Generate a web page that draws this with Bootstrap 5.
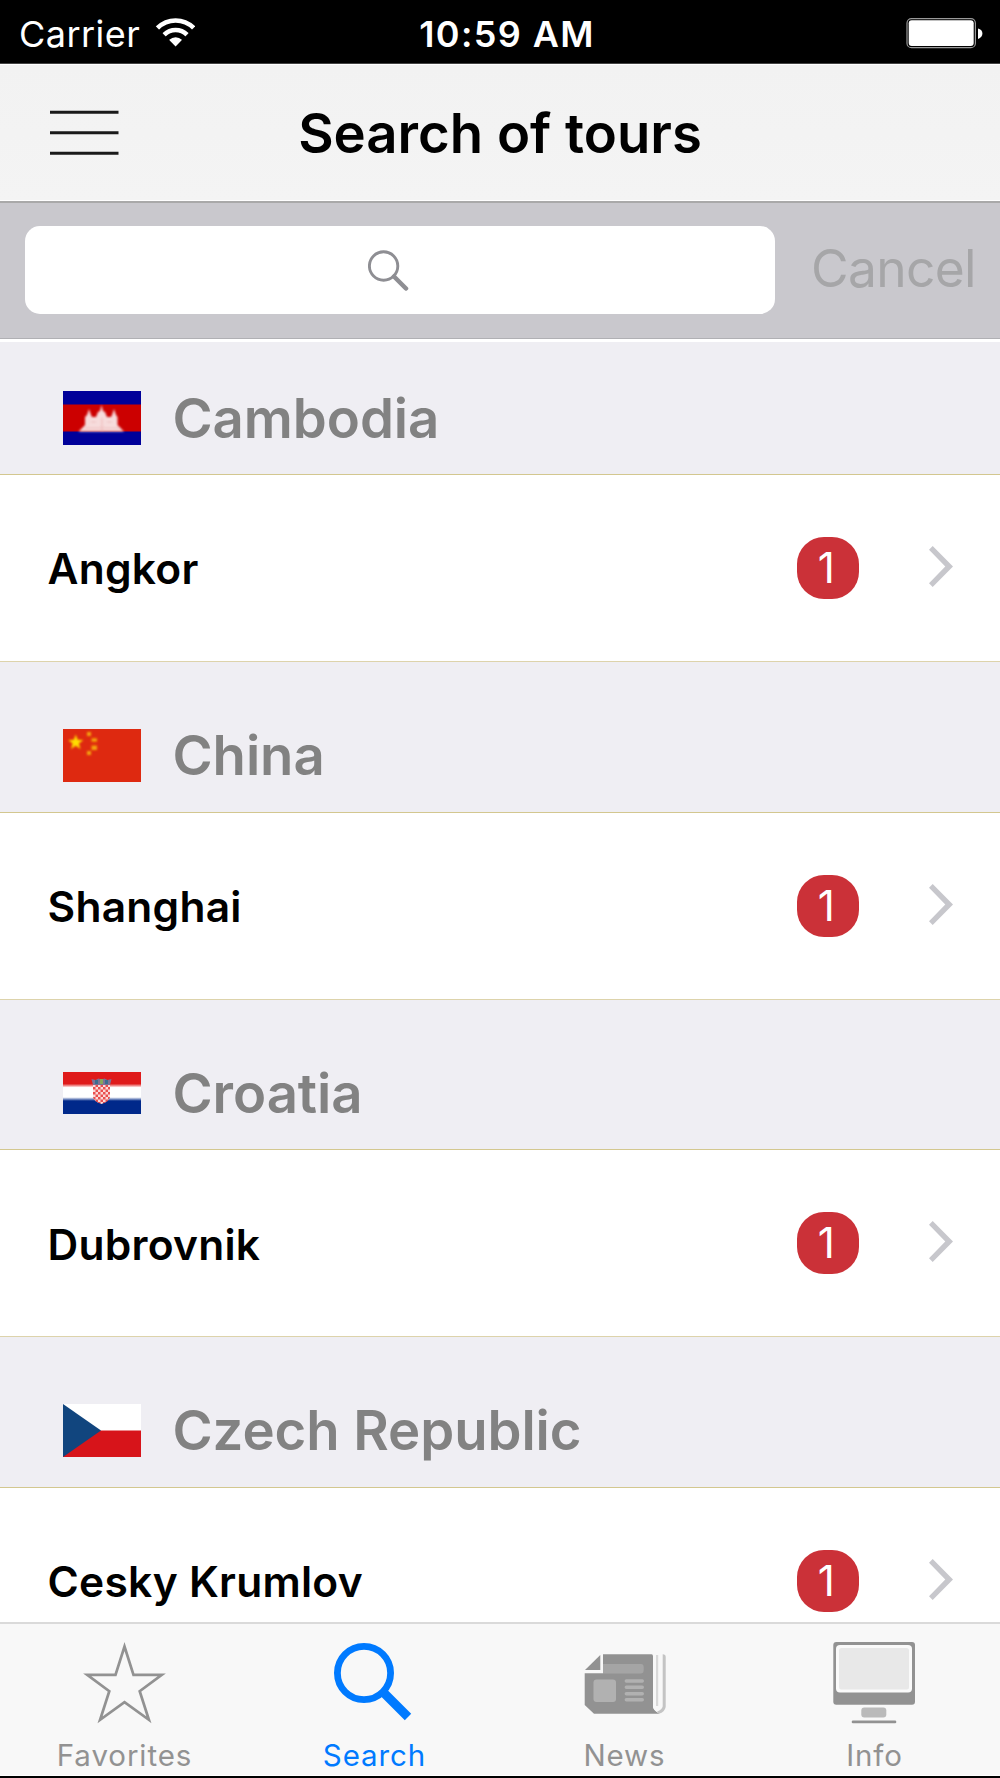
<!DOCTYPE html>
<html lang="en">
<head>
<meta charset="utf-8">
<meta name="viewport" content="width=device-width, initial-scale=1">
<title>Search of tours</title>
<link href="https://cdn.jsdelivr.net/npm/bootstrap@5.3.0/dist/css/bootstrap.min.css" rel="stylesheet">
<style>
body{font-family:Inter,"Noto Sans",sans-serif;color:#000;background:#fff;overflow:hidden;line-height:1}
svg{display:block;flex:none}
.phone{width:1000px;height:1778px}
.status-bar{height:64px;background:#000;border-bottom:1px solid #444;color:#fff;font-size:36px;display:grid;grid-template-columns:1fr auto 1fr;padding:5px 17px 0 19px}
.carrier{font-weight:400;letter-spacing:.45px}
.clock{font-weight:600;letter-spacing:1.37px;padding-left:12px}
.wifi{margin:0 0 4px 15px}
.battery{margin-bottom:2px}
.nav-top{height:139px;background:linear-gradient(#f2f2f2,#f4f4f4);border-top:1px solid #fff;border-bottom:2px solid #a9a9a9;box-shadow:inset 0 -1px #fff;display:grid;grid-template-columns:1fr auto 1fr;padding:0 50px}
.nav-title{font-size:54.5px;font-weight:600}
.search-bar{height:136px;background:#c9c8cd;border-bottom:1px solid #b0b0b4;padding:0 20px 1px 25px}
.search-field{width:750px;height:88px;border-radius:15px;padding-left:343px}
.cancel{font-size:51.5px;letter-spacing:-.68px;color:#a6a6a8;margin-left:36px;padding-bottom:3px}
.tour-list{margin-top:3px;min-height:0}
.country{height:151px;background:#efeef3;border-bottom:1px solid #d3c78f;padding:0 63px 30px;gap:31.5px;color:#828282;font-size:54.5px;font-weight:600;letter-spacing:-.06px}
.country.first-country{height:133px;padding-bottom:29px}
.country.short-country{height:150px;padding-bottom:29px}
.flag-box{height:54px;width:78px}
.city{height:187px;border-bottom:1px solid #ddd3ab;padding:0 47px 0 47.5px;font-size:42.5px;font-weight:600;letter-spacing:.25px}
.city-name{padding-top:3px}
.count{width:62px;height:62px;border-radius:27px;background:#cb3138;color:#fff;font-size:42px;font-weight:400;margin-right:70px;padding-right:3px}
.chev{margin-bottom:3px}
.tab-bar{height:156px;border-top:2px solid #dadada;border-bottom:2px solid #000;background:#f8f8f8;box-shadow:inset 0 -1px #fff}
.tab{color:#929292;font-size:29.5px;letter-spacing:.9px;padding-top:18px;gap:17px}
.tab span{margin-right:1px}
.tab.active{color:#007aff}
</style>
</head>
<body>
<div class="phone d-flex flex-column overflow-hidden">
  <header class="status-bar align-items-center flex-shrink-0">
    <div class="d-flex align-items-center">
      <span class="carrier">Carrier</span>
      <svg class="wifi" width="40" height="30" viewBox="155 17 40 30"><defs><clipPath id="fan"><path d="M175.6 46.5 155 25.5V10H196V25.5Z"/></clipPath></defs><g clip-path="url(#fan)" fill="none" stroke="#fff"><circle cx="175.6" cy="46" r="25.5" stroke-width="4.6"/><circle cx="175.6" cy="46" r="16" stroke-width="4.6"/><circle cx="175.6" cy="46" r="8.8" fill="#fff" stroke="none"/></g></svg>
    </div>
    <div class="clock">10:59 AM</div>
    <svg class="battery ms-auto" width="77" height="32" viewBox="906 17 77 32"><rect x="907" y="18.7" width="68.4" height="29" rx="4.5" fill="none" stroke="#999" stroke-width="1.2"/><rect x="908.7" y="20.3" width="65" height="25.8" rx="3" fill="#fff"/><path d="M978 28.5q4.4 1 4.4 5t-4.4 5.4z" fill="#fff"/></svg>
  </header>
  <nav class="nav-top align-items-center flex-shrink-0">
    <svg width="69" height="46" viewBox="50 110 69 46"><path d="M50 112.2h68.5M50 132.8h68.5M50 153.3h68.5" stroke="#1a1a1a" stroke-width="3"/></svg>
    <div class="nav-title">Search of tours</div>
  </nav>
  <div class="search-bar d-flex align-items-center flex-shrink-0">
    <div class="search-field bg-white d-flex align-items-center flex-shrink-0">
      <svg width="41" height="41" viewBox="368 250 41 41"><circle cx="383.6" cy="266" r="14.2" fill="none" stroke="#8e8e93" stroke-width="2.9"/><path d="m394 276.500 12 12" stroke="#8e8e93" stroke-width="4.5" stroke-linecap="round"/></svg>
    </div>
    <span class="cancel">Cancel</span>
  </div>
  <main class="tour-list flex-grow-1 overflow-hidden">
    <div class="country first-country d-flex align-items-end">
      <div class="flag-box d-flex align-items-center"><svg width="78" height="54"><defs><filter id="soft"><feGaussianBlur stdDeviation=".8"/></filter></defs><path fill="#000099" d="M0 0h78v54H0z"/><path fill="#c00" d="M0 13.500h78v27H0z"/><path filter="url(#soft)" fill="#f6dcdc" d="M15.500 40.500 22 34V26l2-2 2-6 2 6 1 2h4l2-5 2-1 1.500-6 1.500 6 2 1 2 5h4l1-2 2-6 2 6 1.500 2v8l6.500 6.500z"/><path d="M22 37h35M28 31h5M44 31h5M39 27v13" stroke="#eaa5a5" stroke-width="1.200" opacity=".6" filter="url(#soft)"/></svg></div>
      <div class="d-flex align-items-center flag-box text-nowrap">Cambodia</div>
    </div>
    <div class="city d-flex align-items-center"><span class="city-name me-auto">Angkor</span><span class="count d-flex align-items-center justify-content-center">1</span><svg class="chev" width="24" height="41"><path fill="#c7c7cc" d="M3.700 0 24 20.500 3.700 41 0 37.300 16.300 20.500 0 3.700z"/></svg></div>

    <div class="country d-flex align-items-end">
      <div class="flag-box d-flex align-items-center"><svg width="78" height="53"><path fill="#de2910" d="M0 0h78v53H0z"/><g filter="url(#soft)"><path fill="#ffde00" d="m12.700 5.500 2 5.200 5.600.2-4.400 3.500 1.600 5.500-4.800-3.200-4.700 3.200 1.600-5.500L5.200 10.900l5.600-.2z"/><path fill="#f4a408" d="M24 3h4v4h-4zM28.500 9.300h5.500v3.500h-5.500zM28.500 16.500h5.500v4.500h-5.500zM24 22h4v4h-4z"/></g></svg></div>
      <div class="d-flex align-items-center flag-box text-nowrap">China</div>
    </div>
    <div class="city d-flex align-items-center"><span class="city-name me-auto">Shanghai</span><span class="count d-flex align-items-center justify-content-center">1</span><svg class="chev" width="24" height="41"><path fill="#c7c7cc" d="M3.700 0 24 20.500 3.700 41 0 37.300 16.300 20.500 0 3.700z"/></svg></div>

    <div class="country short-country d-flex align-items-end">
      <div class="flag-box d-flex align-items-center"><svg width="78" height="42"><defs><filter id="crest"><feGaussianBlur stdDeviation=".6"/></filter><pattern id="checks" width="5" height="5" patternUnits="userSpaceOnUse"><path fill="#fbdada" d="M0 0h5v5H0z"/><path fill="#ea5050" d="M0 0h2.500v2.500H0zM2.500 2.500H5V5H2.500z"/></pattern><linearGradient id="hr" x2="0" y2="1"><stop offset=".28" stop-color="#df1a1a"/><stop offset=".37" stop-color="#fff"/><stop offset=".6" stop-color="#fff"/><stop offset=".69" stop-color="#00288a"/></linearGradient></defs><path fill="url(#hr)" d="M0 0h78v42H0z"/><g filter="url(#crest)"><path fill="url(#checks)" d="M30 13h17v12q-1 5-8.500 7Q31 30 30 25z"/><path fill="#7f7094" d="m28.500 7 4 1 3-1.500 3 1 3-1 3 1.500 4-1-1.500 6H30z"/><path fill="#3a6d90" d="M32 8h3v4h-3zM42 8h3v4h-3z"/><path fill="#85a75b" d="M37 7h3v5h-3z"/></g></svg></div>
      <div class="d-flex align-items-center flag-box text-nowrap">Croatia</div>
    </div>
    <div class="city d-flex align-items-center"><span class="city-name pt-1 me-auto">Dubrovnik</span><span class="count d-flex align-items-center justify-content-center">1</span><svg class="chev" width="24" height="41"><path fill="#c7c7cc" d="M3.700 0 24 20.500 3.700 41 0 37.300 16.300 20.500 0 3.700z"/></svg></div>

    <div class="country d-flex align-items-end">
      <div class="flag-box d-flex align-items-center"><svg width="78" height="53"><path fill="#fff" d="M0 0h78v53H0z"/><path fill="#d7141a" d="M0 26.500h78V53H0z"/><path fill="#11457e" d="m0 0 38 26.500L0 53z"/></svg></div>
      <div class="d-flex align-items-center flag-box text-nowrap">Czech Republic</div>
    </div>
    <div class="city d-flex align-items-center"><span class="city-name me-auto">Cesky Krumlov</span><span class="count d-flex align-items-center justify-content-center">1</span><svg class="chev" width="24" height="41"><path fill="#c7c7cc" d="M3.700 0 24 20.500 3.700 41 0 37.300 16.300 20.500 0 3.700z"/></svg></div>
  </main>
  <footer class="tab-bar row g-0 flex-shrink-0">
    <div class="tab col-3 d-flex flex-column align-items-center">
      <svg width="84" height="82" viewBox="0 0 84 82"><path fill="none" stroke="#929292" stroke-width="2.700" stroke-miterlimit="10" d="m41.500 4.500 9 28.300h28.300L56.700 49.200l9.200 28.600-24.400-17.600L17.100 77.800l9.200-28.600L4.200 32.800h28.300z"/></svg>
      <span>Favorites</span>
    </div>
    <div class="tab active col-3 d-flex flex-column align-items-center">
      <svg width="84" height="82" viewBox="0 0 84 82"><circle cx="31" cy="31" r="26.600" fill="none" stroke="#007aff" stroke-width="6.800"/><path d="m49 49 26 26" stroke="#007aff" stroke-width="9"/></svg>
      <span>Search</span>
    </div>
    <div class="tab col-3 d-flex flex-column align-items-center">
      <svg width="84" height="82" viewBox="0 0 84 82"><path fill="#929292" d="M20 12.300h48.500q1.500 0 1.500 2V65q1 4 6.500 6.800H11L1.700 63V31.300H20z"/><path fill="#929292" d="M17.300 13v15H2z"/><path fill="#a5a5a5" d="M20 22h38q2.700 0 2.700 3v3q0 3.500-3 3.500H20z"/><rect x="10.500" y="37.500" width="22.500" height="22.500" rx="3" fill="#b1b1b1"/><path d="M43.300 39h16M43.300 45.300h16M43.300 51.700h16M43.300 57.800h16" stroke="#b1b1b1" stroke-width="3.400" stroke-linecap="round"/><path fill="#f8f8f8" d="M70 12.300h11V66l-5 5q-5.500-3-6-6z"/><path fill="#d9d9d9" d="M73 13h2.200v51H73z"/><path fill="#c4c4c4" d="M79.700 12.300q3 0 3 2.500V65q-1 5-6.700 6.800l-2-2q5.300-2.300 5.700-5.500z"/></svg>
      <span>News</span>
    </div>
    <div class="tab col-3 d-flex flex-column align-items-center">
      <svg width="84" height="82" viewBox="0 0 84 82"><rect x=".3" y="0" width="81.700" height="62.700" rx="3" fill="#929292"/><rect x="3" y="3" width="76" height="47.500" rx="4" fill="#fafafa"/><rect x="6" y="6" width="70" height="41.500" rx="2.500" fill="#e8e8e8"/><rect x="28.300" y="65.600" width="25" height="9.800" rx="3" fill="#bababa"/><path d="M20 79.900h42" stroke="#929292" stroke-width="2.600" stroke-linecap="round"/></svg>
      <span>Info</span>
    </div>
  </footer>
</div>
<script src="https://cdn.jsdelivr.net/npm/bootstrap@5.3.0/dist/js/bootstrap.bundle.min.js"></script>
</body>
</html>
